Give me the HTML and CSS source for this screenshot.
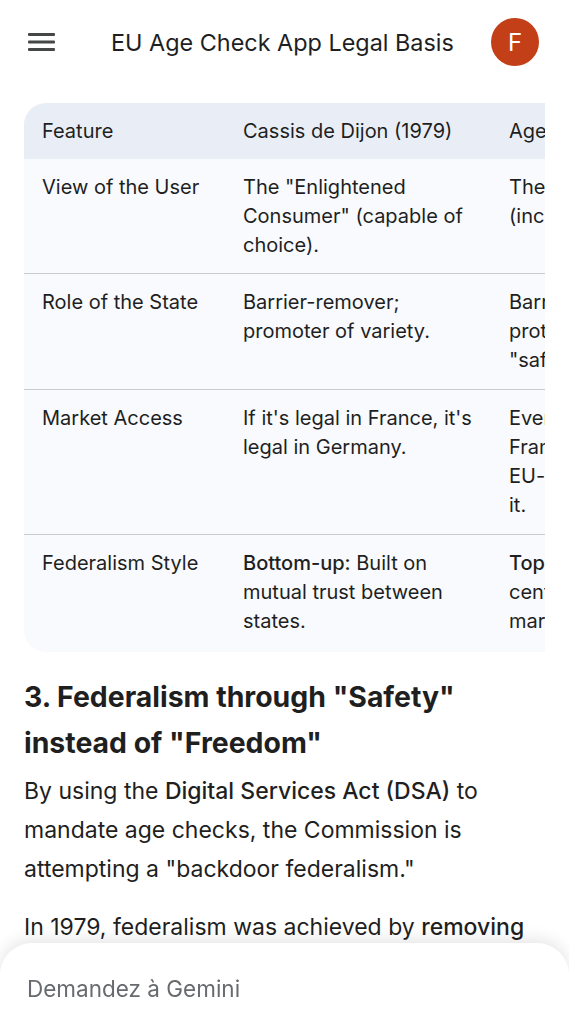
FILE: index.html
```html
<!DOCTYPE html>
<html lang="en">
<head>
<meta charset="utf-8">
<title>EU Age Check App Legal Basis</title>
<link rel="stylesheet" href="styles.css">
</head>
<body>
<header class="topbar">
  <button class="menu" aria-label="Menu">
    <svg width="28" height="20" viewBox="0 0 28 20"><rect x="0" y="1" width="27" height="3" rx="1" fill="#444746"/><rect x="0" y="8.5" width="27" height="3" rx="1" fill="#444746"/><rect x="0" y="16" width="27" height="3" rx="1" fill="#444746"/></svg>
  </button>
  <h1 class="title">EU Age Check App Legal Basis</h1>
  <div class="avatar">F</div>
</header>

<main class="content">
  <div class="table-wrap">
    <table class="cmp">
      <thead>
        <tr><th class="c1">Feature</th><th class="c2">Cassis de Dijon (1979)</th><th class="c3">Age Check App (2025)</th></tr>
      </thead>
      <tbody>
        <tr><td>View of the User</td><td>The "Enlightened Consumer" (capable of choice).</td><td>The "Vulnerable Minor"<br>(incapable of choice).</td></tr>
        <tr><td>Role of the State</td><td>Barrier-remover; promoter of variety.</td><td>Barrier-builder;<br>protector of<br>"safety."</td></tr>
        <tr><td>Market Access</td><td>If it's legal in France, it's legal in Germany.</td><td>Even if it's legal in<br>France, you need an<br>EU-approved app to access<br>it.</td></tr>
        <tr><td>Federalism Style</td><td><strong>Bottom-up:</strong> Built on mutual trust between states.</td><td><strong>Top-down:</strong> Built on<br>centralized control of<br>market access.</td></tr>
      </tbody>
    </table>
  </div>

  <h2 class="section">3. Federalism through "Safety" instead of "Freedom"</h2>
  <p>By using the <b>Digital Services Act (DSA)</b> to mandate age checks, the Commission is attempting a "backdoor federalism."</p>
  <p>In 1979, federalism was achieved by <b>removing</b> national rules. Today, it is being pursued by adding a single European layer of control over access to content.</p>
</main>

<div class="composer">
  <span class="placeholder">Demandez à Gemini</span>
</div>
</body>
</html>
```

FILE: styles.css
```css
* { box-sizing: border-box; }
html, body { margin: 0; padding: 0; background: #ffffff; }
body {
  font-family: Inter, Roboto, "Noto Sans", "Liberation Sans", sans-serif;
  color: #1f1f1f;
  width: 569px;
  height: 1023px;
  overflow: hidden;
}

.topbar {
  height: 84px;
  display: flex;
  align-items: center;
  padding: 0 30px 0 28px;
}
.menu {
  border: 0;
  background: none;
  padding: 0;
  width: 28px;
  height: 20px;
  display: flex;
}
.title {
  margin: 0 0 0 55px;
  flex: 1;
  font-size: 23.4px;
  font-weight: 400;
  color: #1f1f1f;
  white-space: nowrap;
}
.avatar {
  width: 48px;
  height: 48px;
  border-radius: 50%;
  background: #c23f17;
  color: #fff;
  font-size: 24px;
  display: flex;
  align-items: center;
  justify-content: center;
}

.content {
  padding: 19px 24px 0 24px;
}

.table-wrap {
  width: 521px;
  overflow: hidden;
  border-radius: 22px 0 0 22px;
  background: #f8fafd;
}
.cmp {
  border-collapse: collapse;
  table-layout: fixed;
  width: 733px;
  font-size: 20px;
  line-height: 29px;
}
.cmp th, .cmp td {
  text-align: left;
  vertical-align: top;
  padding: 14px 12px 14px 18px;
  font-weight: 400;
}
.cmp thead th { padding-bottom: 13px; }
.cmp tbody tr:first-child td { padding-bottom: 13px; }
.cmp tbody tr:last-child td { padding-bottom: 16px; }
.cmp td:last-child, .cmp th:last-child { white-space: nowrap; }
.cmp .c1 { width: 201px; }
.cmp .c2 { width: 266px; }
.cmp .c3 { width: 266px; }
.cmp thead th { background: #e9eef6; }
.cmp tbody tr + tr td { border-top: 1.5px solid #c9cccf; }
.cmp strong { font-weight: 500; }

.section {
  margin: 22px 0 6px;
  font-size: 28.4px;
  line-height: 46px;
  font-weight: 700;
}
p {
  margin: 0 0 19px;
  font-size: 23px;
  line-height: 39px;
  color: #1f1f1f;
}
p b { font-weight: 500; }

.composer {
  position: fixed;
  left: 0;
  right: 0;
  bottom: 0;
  height: 80px;
  background: #fff;
  border-radius: 32px 32px 0 0;
  box-shadow: 0 -4px 16px rgba(0,0,0,0.10);
  padding: 32px 27px 0;
}
.placeholder {
  font-size: 22.5px;
  color: #676a6e;
}
```
